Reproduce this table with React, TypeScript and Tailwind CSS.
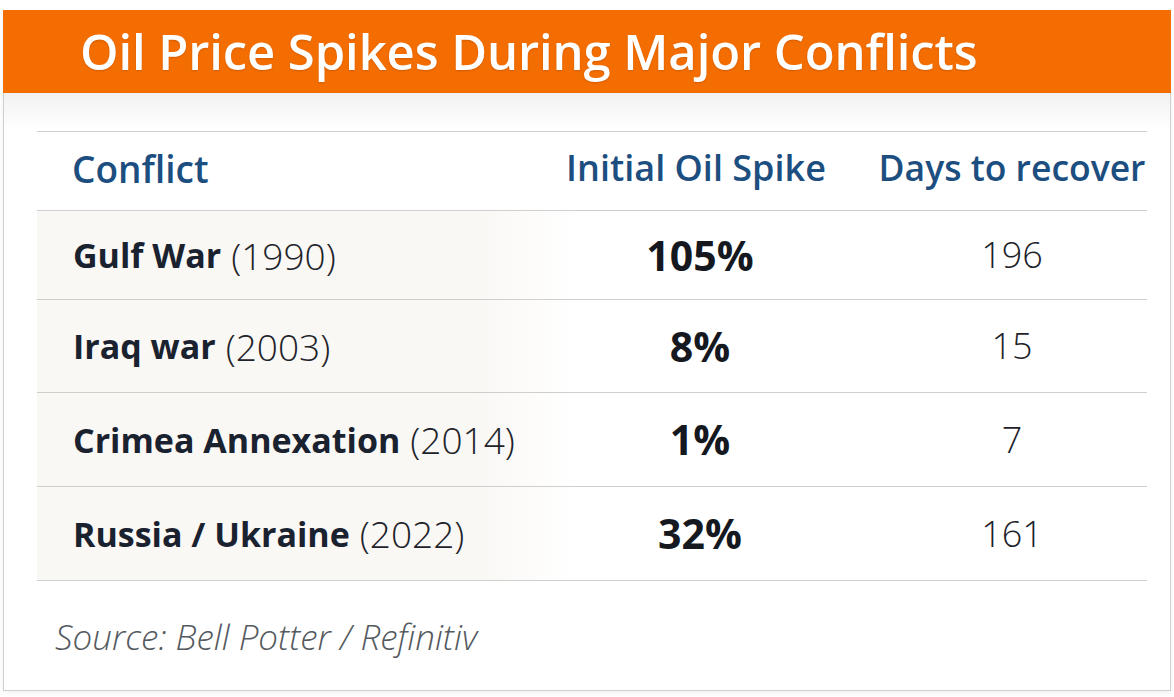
const rows = [
  { name: 'Gulf War', year: '(1990)', spike: '105%', days: '196', h: 'h-[89px]' },
  { name: 'Iraq war', year: '(2003)', spike: '8%', days: '15', h: 'h-[93px]' },
  { name: 'Crimea Annexation', year: '(2014)', spike: '1%', days: '7', h: 'h-[94px]' },
  { name: 'Russia / Ukraine', year: '(2022)', spike: '32%', days: '161', h: 'h-[94px]' },
]

export default function App() {
  return (
    <div className="h-[697px] w-[1174px] bg-white pt-[10px] pl-[3px] font-['Open_Sans',sans-serif]">
      <div className="w-[1168px] h-[681px] border-x border-b border-[#cfcfcf] shadow-[0_2px_6px_rgba(0,0,0,0.06)] bg-white">
        {/* Title bar */}
        <div className="h-[83px] -mx-px bg-[#f46d00] flex items-center pl-[77px]">
          <h1 className="text-[49px] leading-none font-semibold text-white tracking-[-0.1px] [text-shadow:0_1px_2px_rgba(0,0,0,0.15)]">
            Oil Price Spikes During Major Conflicts
          </h1>
        </div>

        <div className="pt-[38px] pl-[33px] bg-[linear-gradient(to_bottom,#f1f1f1,#ffffff_36px)]">
          <div className="w-[1110px] border-t border-[#cfcfcf]">
            {/* Header row */}
            <div className="grid grid-cols-[486px_354px_270px] h-[79px] items-center pb-[6px] border-b border-[#cfcfcf] font-semibold text-[#1c4e7f] leading-none whitespace-nowrap">
              <div className="pl-[35px] text-[37px]">Conflict</div>
              <div className="text-center pr-[8px] text-[36px]">Initial Oil Spike</div>
              <div className="text-center text-[35.5px]">Days to recover</div>
            </div>

            {rows.map((r) => (
              <div
                key={r.name}
                className={`grid grid-cols-[486px_354px_270px] ${r.h} border-b border-[#cfcfcf] text-[#1a2230] leading-none bg-[linear-gradient(to_right,#faf8f5_0px,#faf8f5_440px,#ffffff_540px)]`}
              >
                <div className="flex items-center pl-[36px] text-[34px] whitespace-nowrap">
                  <span className="font-bold">{r.name}</span>
                  <span className="font-light text-[37px] ml-[10px] text-[#1e232a]">{r.year}</span>
                </div>
                <div className="flex items-center justify-center text-[41px] font-bold text-[#15191f]">{r.spike}</div>
                <div className="flex items-center justify-center text-[36px] font-light text-[#1e232a]">{r.days}</div>
              </div>
            ))}
          </div>

          <p className="pl-[18px] pt-[38px] text-[35px] leading-none italic font-light text-[#555a60]">
            Source: Bell Potter / Refinitiv
          </p>
        </div>
      </div>
    </div>
  )
}
